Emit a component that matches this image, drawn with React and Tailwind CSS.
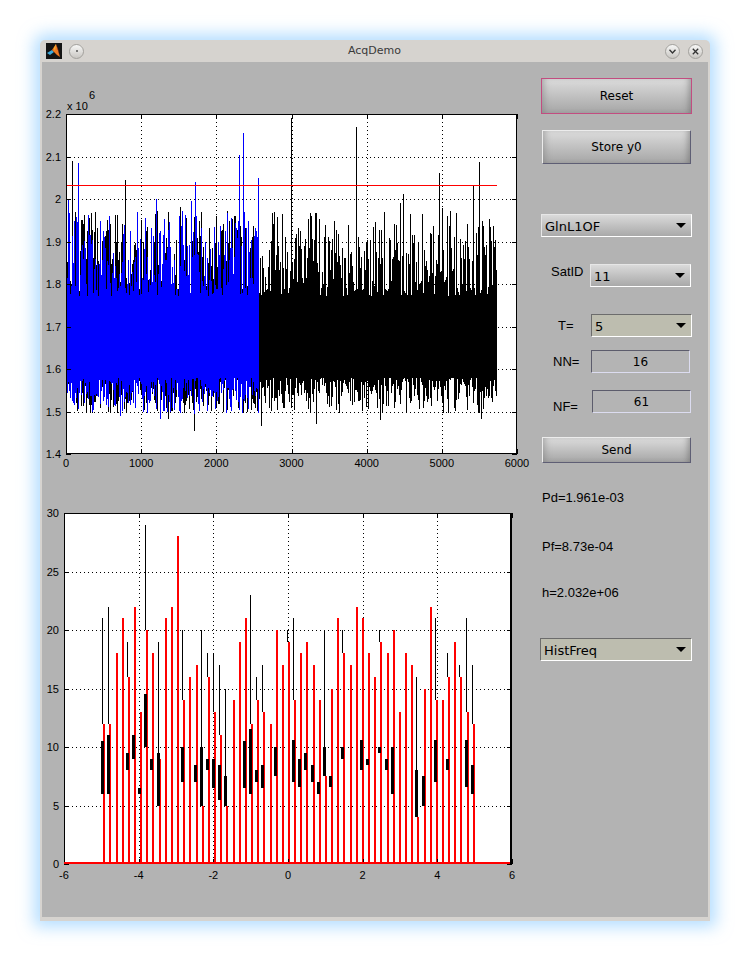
import { useMemo } from "react";

// seeded random so the noise is the same on every load
function rng(seed) {
  let a = seed >>> 0;
  return () => {
    a = (a + 0x6d2b79f5) >>> 0;
    let t = a;
    t = Math.imul(t ^ (t >>> 15), t | 1);
    t ^= t + Math.imul(t ^ (t >>> 7), t | 61);
    return ((t ^ (t >>> 14)) >>> 0) / 4294967296;
  };
}

const TX0 = 66, TY0 = 114, TW = 451, TH = 340;
const tx = (x) => TX0 + (x * TW) / 6000;
const ty = (v) => TY0 + ((2.2 - v) / 0.8) * TH;

const BX0 = 64, BY0 = 513, BW = 448, BH = 351;
const bx = (x) => BX0 + ((x + 6) * BW) / 12;
const by = (v) => BY0 + BH - (v * BH) / 30;

function makeSignal(seed, n, spikes, dips) {
  const r = rng(seed);
  const cols = [];
  for (let c = 0; c < n; c++) {
    let top = 1.772 + 0.2 * Math.pow(r(), 1.4);
    if (r() < 0.05) top += 0.03 + 0.08 * r();
    let bot = 1.58 - 0.085 * Math.pow(r(), 1.3);
    if (r() < 0.04) bot -= 0.03 * r();
    cols.push([top, bot]);
  }
  spikes.forEach(([x, v]) => {
    const c = Math.round((x * TW) / 6000);
    if (cols[c]) cols[c][0] = v;
  });
  dips.forEach(([x, v]) => {
    const c = Math.round((x * TW) / 6000);
    if (cols[c]) cols[c][1] = v;
  });
  return cols
    .map(([t, b], c) => `M${TX0 + c + 0.5} ${ty(t).toFixed(1)}V${ty(b).toFixed(1)}`)
    .join("");
}

const font = { fontFamily: "'Liberation Sans', Arial, sans-serif" };

function TopPlot() {
  const black = useMemo(
    () =>
      makeSignal(
        7,
        431,
        [[80, 2.089], [780, 2.045], [2990, 2.19], [3860, 2.17], [4450, 1.99], [5420, 2.03], [5500, 2.088], [5000, 1.98]],
        [[1700, 1.455], [2590, 1.465], [3320, 1.47], [4180, 1.48]]
      ),
    []
  );
  const blue = useMemo(
    () =>
      makeSignal(
        23,
        193,
        [[20, 2.0], [160, 2.084], [950, 1.97], [1200, 2.0], [1720, 2.04], [2300, 2.103], [2350, 2.156], [2550, 2.05]],
        [[720, 1.49], [1020, 1.5]]
      ),
    []
  );
  const yt = [1.4, 1.5, 1.6, 1.7, 1.8, 1.9, 2.0, 2.1, 2.2];
  const xt = [0, 1000, 2000, 3000, 4000, 5000, 6000];
  const R = TX0 + TW, B = TY0 + TH;
  return (
    <svg width="490" height="420" viewBox="42 62 490 420" className="block">
      <rect x={TX0} y={TY0} width={TW} height={TH} fill="#fff" />
      <g stroke="#000" strokeWidth="1" strokeDasharray="1 3" shapeRendering="crispEdges">
        {xt.slice(1, -1).map((x) => (
          <line key={x} x1={Math.round(tx(x)) + 0.5} y1={TY0} x2={Math.round(tx(x)) + 0.5} y2={B} />
        ))}
        {yt.slice(1, -1).map((v) => (
          <line key={v} x1={TX0} y1={Math.round(ty(v)) + 0.5} x2={R} y2={Math.round(ty(v)) + 0.5} />
        ))}
      </g>
      <path d={black} stroke="#000" strokeWidth="1" shapeRendering="crispEdges" />
      <path d={blue} stroke="#0000ff" strokeWidth="1" shapeRendering="crispEdges" />
      <line x1={TX0} y1="185.5" x2={tx(5730)} y2="185.5" stroke="#ff0000" strokeWidth="1" shapeRendering="crispEdges" />
      <g stroke="#000" strokeWidth="1" shapeRendering="crispEdges">
        <rect x={TX0 + 0.5} y={TY0 + 0.5} width={TW - 1} height={TH - 1} fill="none" />
        {xt.map((x) => {
          const p = Math.round(tx(x)) + 0.5;
          return (
            <g key={x}>
              <line x1={p} y1={B} x2={p} y2={B - 5} />
              <line x1={p} y1={TY0} x2={p} y2={TY0 + 5} />
            </g>
          );
        })}
        {yt.map((v) => {
          const p = Math.round(ty(v)) + 0.5;
          return (
            <g key={v}>
              <line x1={TX0} y1={p} x2={TX0 + 5} y2={p} />
              <line x1={R} y1={p} x2={R - 5} y2={p} />
            </g>
          );
        })}
      </g>
      <g style={font} fontSize="11" fill="#000">
        {yt.map((v) => (
          <text key={v} x="61" y={ty(v) + 4} textAnchor="end">
            {v === 2 ? "2" : v.toFixed(1)}
          </text>
        ))}
        {xt.map((x) => (
          <text key={x} x={tx(x)} y="467" textAnchor="middle">
            {x}
          </text>
        ))}
        <text x="67" y="110">x 10</text>
        <text x="89" y="99">6</text>
      </g>
    </svg>
  );
}

// [black height, red height, thick low, thick high]
const BINS = [
  [21, 12, 6, 10.5], [22, 12, 6, 11], [0, 18, 0, 0], [0, 21, 0, 0], [19, 16, 8, 9.5],
  [0, 22, 9, 11], [0, 13, 6, 6.5], [29, 20, 10, 14.5], [0, 18, 8, 9], [19, 9, 5, 9.5],
  [0, 21, 0, 0], [0, 22, 0, 0], [0, 28, 0, 0], [20, 14, 7, 10], [0, 16, 0, 0],
  [0, 17, 7, 8.5], [20, 5, 5, 10], [18, 16, 8, 9], [18, 13, 6.5, 9], [17, 11, 5.5, 8.5],
  [15, 5, 5, 7.5], [0, 14, 0, 0], [0, 19, 0, 0], [0, 21, 6.5, 10.5], [23, 12, 6, 11.5],
  [16, 14, 7, 8], [17, 13, 6.5, 8.5], [0, 12, 0, 0], [0, 20, 7.5, 10], [0, 17, 0, 0],
  [20, 19, 0, 0], [21, 14, 7, 10.6], [0, 18, 6.6, 9], [0, 19, 8, 9.5], [0, 17, 7, 8.5],
  [0, 14, 6, 7], [20, 7.5, 7.5, 10], [0, 15, 6.6, 7.5], [0, 21, 0, 0], [20, 18, 9, 10],
  [0, 17, 0, 0], [0, 22, 0, 0], [0, 21, 8, 10.6], [0, 18, 8.5, 9], [0, 16, 0, 0],
  [20, 19, 9.5, 10], [0, 18, 8, 9], [0, 20, 6, 10], [0, 13, 0, 0], [0, 18, 0, 0],
  [0, 17, 0, 0], [16, 4, 4, 8], [0, 15, 5, 7.5], [0, 22, 0, 0], [21, 14, 7, 10.6],
  [0, 14, 0, 0], [18, 16, 8, 9], [0, 19, 0, 0], [17, 16, 0, 0], [21, 13, 6.6, 10.6],
  [17, 12, 6, 8.5],
];

function BottomPlot() {
  const yt = [0, 5, 10, 15, 20, 25, 30];
  const xt = [-6, -4, -2, 0, 2, 4, 6];
  const R = BX0 + BW, B = BY0 + BH;
  return (
    <svg width="490" height="418" viewBox="42 482 490 418" className="block">
      <rect x={BX0} y={BY0} width={BW} height={BH} fill="#fff" />
      <g stroke="#000" strokeWidth="1" strokeDasharray="1 3" shapeRendering="crispEdges">
        {xt.slice(1, -1).map((x) => (
          <line key={x} x1={Math.round(bx(x)) + 0.5} y1={BY0} x2={Math.round(bx(x)) + 0.5} y2={B} />
        ))}
        {yt.slice(1, -1).map((v) => (
          <line key={v} x1={BX0} y1={Math.round(by(v)) + 0.5} x2={R} y2={Math.round(by(v)) + 0.5} />
        ))}
      </g>
      <g shapeRendering="crispEdges">
        {BINS.map(([bk, rd, lo, hi], i) => {
          const x = Math.round(bx(-4.95 + i * 0.165));
          return (
            <g key={i}>
              <rect x={x} y={by(rd)} width="2" height={by(0) - by(rd)} fill="#ff0000" />
              {hi > 0 && <rect x={x - 2} y={by(hi)} width="3" height={Math.max(1, by(lo) - by(hi))} fill="#000" />}
              {bk > 0 && (
                <rect
                  x={x - 1}
                  y={by(bk)}
                  width="1"
                  height={by(Math.max(hi, Math.min(rd, bk - 0.5))) - by(bk)}
                  fill="#000"
                />
              )}
            </g>
          );
        })}
      </g>
      <g stroke="#000" strokeWidth="1" shapeRendering="crispEdges">
        <rect x={BX0 + 0.5} y={BY0 + 0.5} width={BW - 1} height={BH - 1} fill="none" />
        <line x1={R - 1.5} y1={BY0} x2={R - 1.5} y2={B} />
        {xt.map((x) => {
          const p = Math.round(bx(x)) + 0.5;
          return (
            <g key={x}>
              <line x1={p} y1={B} x2={p} y2={B - 5} />
              <line x1={p} y1={BY0} x2={p} y2={BY0 + 5} />
            </g>
          );
        })}
        {yt.map((v) => {
          const p = Math.round(by(v)) + 0.5;
          return (
            <g key={v}>
              <line x1={BX0} y1={p} x2={BX0 + 5} y2={p} />
              <line x1={R} y1={p} x2={R - 5} y2={p} />
            </g>
          );
        })}
      </g>
      <line x1={BX0} y1={B - 1} x2={R - 2} y2={B - 1} stroke="#ff0000" strokeWidth="2" shapeRendering="crispEdges" />
      <g style={font} fontSize="11" fill="#000">
        {yt.map((v) => (
          <text key={v} x="59" y={by(v) + 4} textAnchor="end">
            {v}
          </text>
        ))}
        {xt.map((x) => (
          <text key={x} x={bx(x)} y="879" textAnchor="middle">
            {x}
          </text>
        ))}
      </g>
    </svg>
  );
}

function Arrow() {
  return (
    <svg width="10" height="5" viewBox="0 0 10 5" className="mr-[5px]">
      <polygon points="0,0 10,0 5,5" fill="#000" />
    </svg>
  );
}

function Select({ value, khaki, className = "" }) {
  const skin = khaki
    ? "bg-[#bdbdaf] border-t-[#6c6c6c] border-l-[#6c6c6c] border-b-white border-r-white"
    : "bg-linear-to-b from-[#dadada] to-[#a9a9a9] border-t-[#e6e6e6] border-l-[#e6e6e6] border-b-white border-r-white";
  return (
    <div className={`flex h-[23px] items-center justify-between border ${skin} ${className}`}>
      <span className="pl-[3px] pt-[1px] font-['DejaVu_Sans',sans-serif] text-[13px] leading-none text-black">{value}</span>
      <Arrow />
    </div>
  );
}

function Button({ children, focus, className = "" }) {
  const edge = focus
    ? "border border-[#c24d80]"
    : "border border-t-[#ececec] border-l-[#ececec] border-b-[#5e5e74] border-r-[#5e5e74]";
  return (
    <div
      className={`flex items-center justify-center bg-linear-to-b from-[#dcdcdc] to-[#a6a6a6] shadow-[inset_6px_0_6px_-4px_rgba(120,120,120,0.5),inset_-6px_0_6px_-4px_rgba(90,90,90,0.5)] font-['DejaVu_Sans',sans-serif] text-[12px] text-black ${edge} ${className}`}
    >
      {children}
    </div>
  );
}

function Edit({ value, className = "" }) {
  return (
    <div
      className={`flex h-[23px] items-center justify-center border border-t-[#5c5c6c] border-l-[#5c5c6c] border-b-[#dcdcf0] border-r-[#dcdcf0] bg-[#b4b4b4] font-['DejaVu_Sans',sans-serif] text-[12px] text-black ${className}`}
    >
      {value}
    </div>
  );
}

const lab = "font-['Liberation_Sans',Arial,sans-serif] text-[13px] leading-[15px] text-black";

function Controls() {
  return (
    <div className="ml-[9px] flex w-[151px] flex-col">
      <Button focus className="mt-[16px] h-[36px] w-[151px]">Reset</Button>
      <Button className="ml-[1px] mt-[16px] h-[34px] w-[149px]">Store y0</Button>
      <Select value="GlnL1OF" className="mt-[50px] w-[151px]" />
      <div className="mt-[27px] flex h-[23px] items-start">
        <span className={`${lab} w-[49px] pl-[10px]`}>SatID</span>
        <Select value="11" className="w-[101px]" />
      </div>
      <div className="mt-[27px] flex h-[23px] items-center">
        <span className={`${lab} w-[50px] pl-[17px]`}>T=</span>
        <Select value="5" khaki className="w-[101px]" />
      </div>
      <div className="mt-[13px] flex h-[23px] items-center">
        <span className={`${lab} w-[50px] pl-[12px]`}>NN=</span>
        <Edit value="16" className="w-[99px]" />
      </div>
      <div className="mt-[17px] flex h-[23px] items-start">
        <span className={`${lab} mt-[9px] w-[51px] pl-[12px]`}>NF=</span>
        <Edit value="61" className="w-[99px]" />
      </div>
      <Button className="ml-[1px] mt-[24px] h-[26px] w-[149px]">Send</Button>
      <div className={`${lab} ml-[1px] mt-[27px]`}>Pd=1.961e-03</div>
      <div className={`${lab} ml-[1px] mt-[34px]`}>Pf=8.73e-04</div>
      <div className={`${lab} ml-[1px] mt-[31px]`}>h=2.032e+06</div>
      <Select value="HistFreq" khaki className="-ml-[1px] mt-[38px] w-[152px]" />
    </div>
  );
}

function Circle({ children }) {
  return (
    <div className="flex h-[15px] w-[15px] items-center justify-center rounded-full border border-[#a3a19d] bg-linear-to-b from-[#f7f7f6] to-[#c9c7c3]">
      {children}
    </div>
  );
}

function TitleBar() {
  return (
    <div className="flex h-[22px] items-center">
      <svg width="16" height="16" viewBox="0 0 16 16" className="ml-[6px]">
        <rect width="16" height="16" fill="#141414" />
        <path d="M1 10 L6 7 L8 9 L4 12 Z" fill="#3da9dc" />
        <path d="M6 7 L10 1 L14 14 L11 12 L8 9 Z" fill="#ee7a22" />
        <path d="M10 1 L12 6 L14 14 Z" fill="#c2401a" />
        <path d="M8 5 L10 1 L9 8 Z" fill="#f7b733" />
      </svg>
      <div className="ml-[7px]">
        <Circle>
          <div className="h-[2px] w-[2px] rounded-full bg-[#555]" />
        </Circle>
      </div>
      <div className="flex-1 text-center font-['DejaVu_Sans',sans-serif] text-[11px] text-[#3a3a3a]">AcqDemo</div>
      <div className="mr-[7px] flex gap-[8px]">
        <Circle>
          <svg width="7" height="5" viewBox="0 0 7 5">
            <path d="M0.5 0.8 L3.5 4 L6.5 0.8" fill="none" stroke="#333" strokeWidth="1.3" />
          </svg>
        </Circle>
        <Circle>
          <svg width="7" height="7" viewBox="0 0 7 7">
            <path d="M0.8 0.8 L6.2 6.2 M6.2 0.8 L0.8 6.2" fill="none" stroke="#333" strokeWidth="1.3" />
          </svg>
        </Circle>
      </div>
    </div>
  );
}

export default function App() {
  return (
    <div className="min-h-[962px] w-[750px] bg-white pl-[40px] pt-[40px]">
      <div className="flex h-[881px] w-[670px] flex-col rounded-t-[5px] bg-[#d6d3cf] shadow-[0_0_16px_6px_rgba(120,195,255,0.55)]">
        <TitleBar />
        <div className="mx-[2px] flex flex-1 bg-[#b3b3b3]">
          <div className="flex w-[490px] flex-col">
            <TopPlot />
            <BottomPlot />
          </div>
          <Controls />
        </div>
        <div className="h-[4px]" />
      </div>
    </div>
  );
}
